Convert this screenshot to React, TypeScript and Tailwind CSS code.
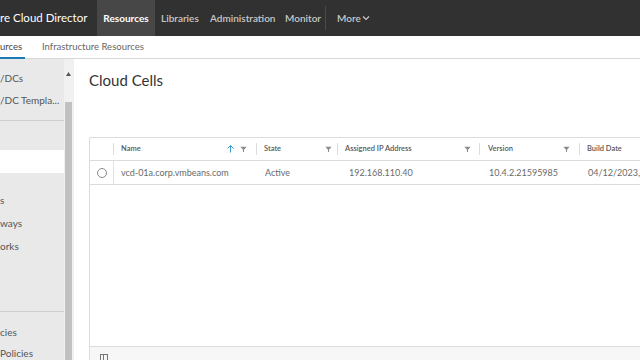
import React from "react";

const Filter = () => (
  <svg width="7" height="7" viewBox="0 0 8 8" className="shrink-0">
    <path d="M0.5 0.8h7L4.6 4.2v3L3.4 6.6V4.2z" fill="#8a8a8a" />
  </svg>
);

export default function App() {
  const font = { fontFamily: "Lato, 'Open Sans', sans-serif" };
  return (
    <div className="w-[640px] h-[360px] overflow-hidden bg-white flex flex-col" style={font}>
      {/* header */}
      <div className="h-[36px] bg-[#313131] flex items-stretch shrink-0">
        <div className="w-[97px] flex items-center text-white text-[11.5px] whitespace-nowrap overflow-hidden">re Cloud Director</div>
        <div className="w-[58px] bg-[#474747] flex items-center justify-center text-white text-[10px] font-bold">Resources</div>
        <div className="flex items-center pl-[6px] text-[#c8c8c8] text-[10px] font-semibold whitespace-nowrap">
          <span className="w-[49px]">Libraries</span>
          <span className="w-[75px]">Administration</span>
          <span className="w-[40px]">Monitor</span>
        </div>
        <div className="flex items-center">
          <div className="w-px h-[24px] bg-[#4a4a4a]" />
        </div>
        <div className="flex items-center pl-[11px] text-[#c8c8c8] text-[10px] font-semibold gap-[1px]">
          More
          <svg width="8" height="6" viewBox="0 0 8 6"><path d="M1 1.5l3 3 3-3" stroke="#c8c8c8" strokeWidth="1.2" fill="none" /></svg>
        </div>
      </div>
      {/* tabs */}
      <div className="h-[23px] shrink-0 flex items-stretch border-b border-[#d7d7d7] text-[9.5px]">
        <div className="relative w-[25px] flex items-center text-[#444] whitespace-nowrap">
          urces
          <div className="absolute left-0 right-0 bottom-[-1px] h-[2px] bg-[#1a7ab5]" />
        </div>
        <div className="flex items-center pl-[17px] text-[#666] whitespace-nowrap">Infrastructure Resources</div>
      </div>
      {/* body */}
      <div className="flex flex-1 min-h-0">
        {/* sidebar */}
        <div className="w-[64px] bg-[#e9e9e9] flex flex-col text-[10px] text-[#555] whitespace-nowrap shrink-0 overflow-hidden">
          <div className="h-[62px] shrink-0 flex flex-col pt-[13px] gap-[10px] border-b border-[#cfcfcf]">
            <span className="h-[12px] leading-[12px]">/DCs</span>
            <span className="h-[12px] leading-[12px]">/DC Templa...</span>
          </div>
          <div className="h-[29px] shrink-0" />
          <div className="h-[23px] shrink-0 bg-white" />
          <div className="h-[139px] shrink-0 flex flex-col pt-[21px] gap-[11px] border-b border-[#cfcfcf]">
            <span className="h-[12px] leading-[12px]">s</span>
            <span className="h-[12px] leading-[12px]">ways</span>
            <span className="h-[12px] leading-[12px]">orks</span>
          </div>
          <div className="flex flex-col pt-[14px] gap-[9px] shrink-0">
            <span className="h-[12px] leading-[12px]">cies</span>
            <span className="h-[12px] leading-[12px]">Policies</span>
          </div>
        </div>
        {/* scrollbar */}
        <div className="w-[9px] bg-[#f1f1f1] flex flex-col shrink-0">
          <div className="h-[43px] flex justify-center pt-[13px]">
            <svg width="5" height="4" viewBox="0 0 5 4"><path d="M2.5 0L5 4H0z" fill="#555" /></svg>
          </div>
          <div className="flex-1 bg-[#c1c1c1] mx-[1px]" />
        </div>
        {/* main */}
        <div className="flex-1 min-w-0 bg-white pl-[15px] flex flex-col border-l border-[#f0f0f0]">
          <div className="h-[78px] pt-[10px] text-[15px] text-[#333] shrink-0">Cloud Cells</div>
          <div className="flex-1 border-l border-t border-[#dcdcdc] rounded-tl-[2px] flex flex-col min-w-[560px]">
            <div className="h-[23px] flex items-center border-b border-[#dcdcdc] text-[7.5px] font-semibold text-[#565656] whitespace-nowrap">
              <div className="w-[23px] h-full" />
              <div className="w-px h-[12px] bg-[#dcdcdc]" />
              <div className="w-[142px] pl-[7px] pr-[9px] flex items-center">
                <span className="flex-1">Name</span>
                <svg width="7" height="8" viewBox="0 0 7 8" className="mr-[6px]"><path d="M3.5 0.5L6.5 3.5M3.5 0.5L0.5 3.5M3.5 0.5V7.5" stroke="#3b9cd0" strokeWidth="1" fill="none" /></svg>
                <Filter />
              </div>
              <div className="w-px h-[12px] bg-[#dcdcdc]" />
              <div className="w-[80px] pl-[7px] pr-[5px] flex items-center">
                <span className="flex-1">State</span>
                <Filter />
              </div>
              <div className="w-px h-[12px] bg-[#dcdcdc]" />
              <div className="w-[141px] pl-[7px] pr-[8px] flex items-center">
                <span className="flex-1">Assigned IP Address</span>
                <Filter />
              </div>
              <div className="w-px h-[12px] bg-[#dcdcdc]" />
              <div className="w-[99px] pl-[8px] pr-[9px] flex items-center">
                <span className="flex-1">Version</span>
                <Filter />
              </div>
              <div className="w-px h-[12px] bg-[#dcdcdc]" />
              <div className="pl-[7px]">Build Date</div>
            </div>
            <div className="h-[24px] flex items-center border-b border-[#dcdcdc] text-[9px] text-[#6a6a6a] whitespace-nowrap">
              <div className="w-[23px] h-full flex items-center justify-center">
                <div className="w-[10px] h-[10px] rounded-full border border-[#8a8a8a] bg-white" />
              </div>
              <div className="w-px h-full bg-[#e3e3e3]" />
              <div className="w-[143px] pl-[7px]">vcd-01a.corp.vmbeans.com</div>
              <div className="w-[81px] pl-[8px]">Active</div>
              <div className="w-[142px] pl-[11px]">192.168.110.40</div>
              <div className="w-[100px] pl-[9px]">10.4.2.21595985</div>
              <div className="pl-[8px]">04/12/2023, 0</div>
            </div>
            <div className="flex-1" />
            <div className="h-[14px] bg-[#f7f7f7] border-t border-[#dcdcdc] flex items-end pl-[10px]">
              <svg width="8" height="6" viewBox="0 0 8 6"><rect x="0.5" y="0.5" width="7" height="6" fill="none" stroke="#777" /><path d="M3.5 0.5v6" stroke="#777" /></svg>
            </div>
          </div>
        </div>
      </div>
    </div>
  );
}
